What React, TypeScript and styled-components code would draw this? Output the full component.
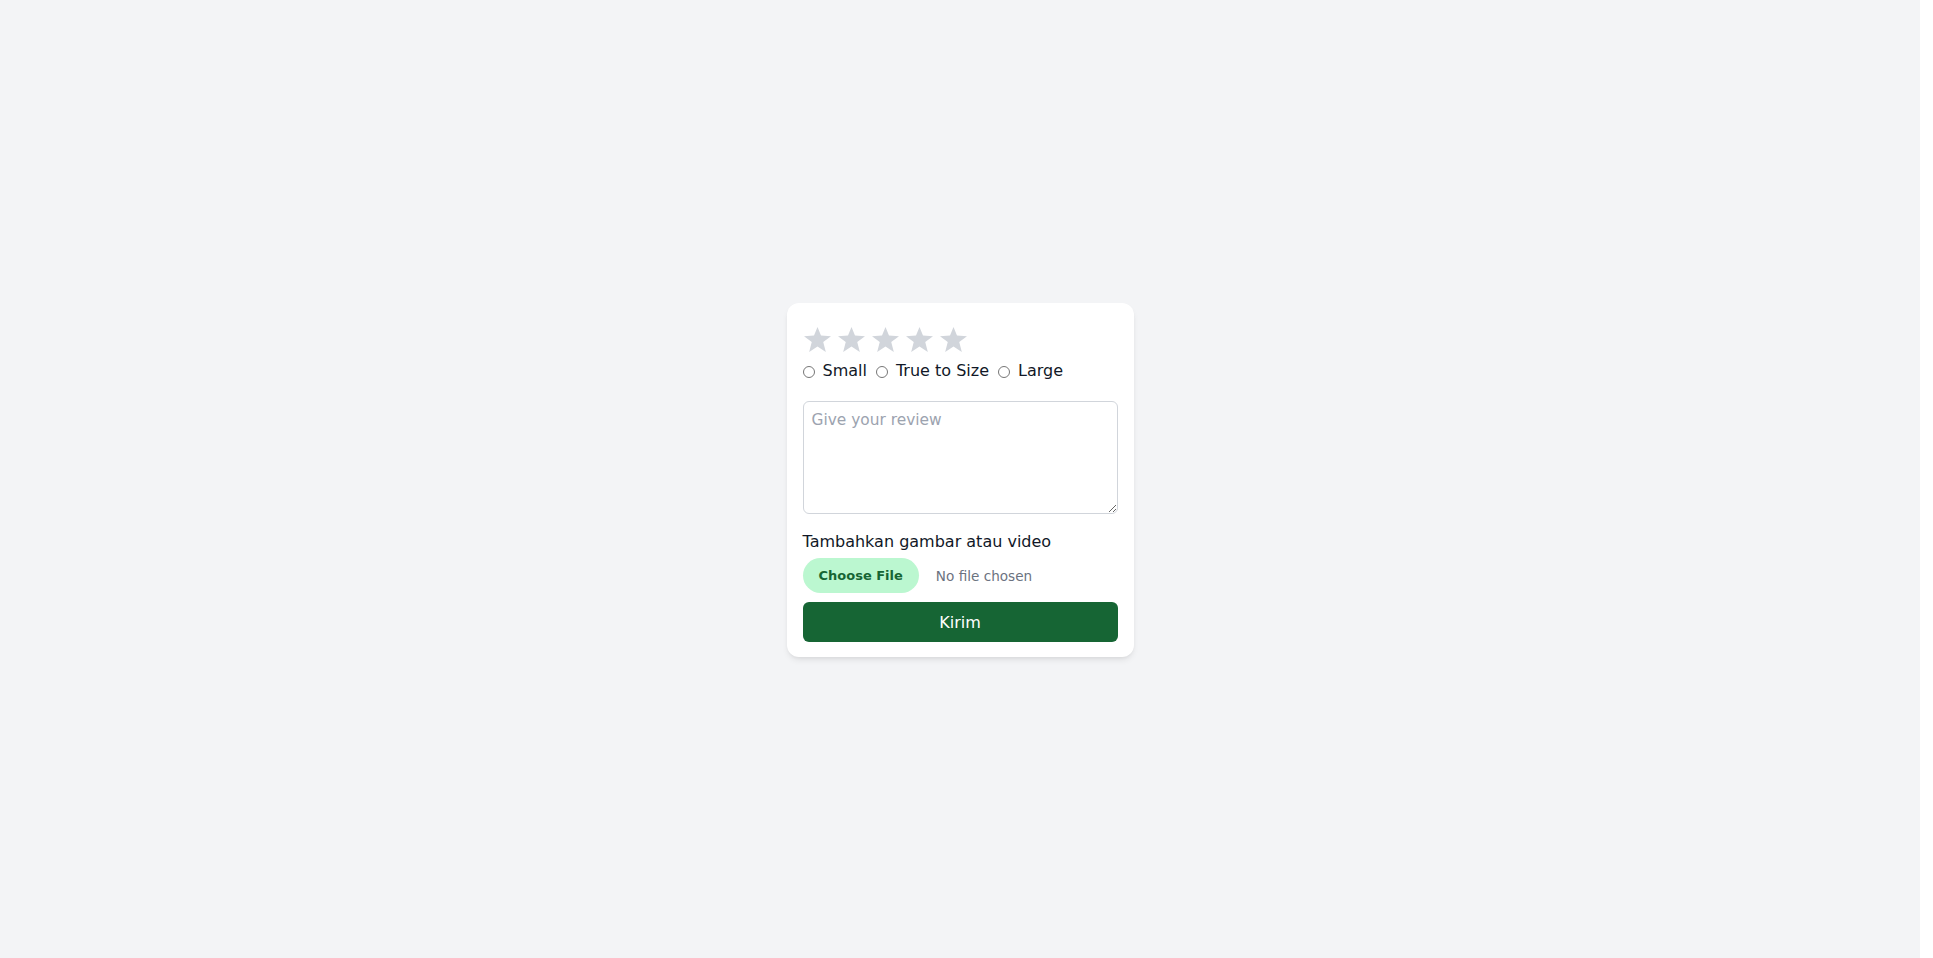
import React from "react";
import styled, { createGlobalStyle } from "styled-components";

const Global = createGlobalStyle`
  html, body { margin: 0; padding: 0; background: #ffffff; }
  body { font-family: "DejaVu Sans", "Liberation Sans", sans-serif; color: #111827; }
  * { box-sizing: border-box; }
`;

const Page = styled.div`
  width: calc(100vw - 13px);
  min-height: 100vh;
  padding-top: 2px;
  background: #f3f4f6;
  display: flex;
  align-items: center;
  justify-content: center;
`;

const Card = styled.form`
  width: 347px;
  background: #ffffff;
  border-radius: 12px;
  padding: 16px 16px 15px;
  box-shadow: 0 4px 6px -1px rgba(0, 0, 0, 0.08), 0 2px 4px -2px rgba(0, 0, 0, 0.08);
  display: flex;
  flex-direction: column;
`;

const StarRow = styled.div`
  display: flex;
  gap: 7px;
  padding: 8px 0 3px 1px;
`;

const StarIcon = styled.svg`
  width: 27px;
  height: 25px;
  display: block;
  fill: #d1d5db;
  cursor: pointer;
`;

const SizeRow = styled.div`
  display: flex;
  align-items: center;
  gap: 9px;
  margin-top: 4px;
  height: 24px;
`;

const SizeOption = styled.label`
  display: flex;
  align-items: center;
  gap: 8px;
  font-size: 16px;
  line-height: 24px;
  color: #111827;
`;

const Radio = styled.input`
  width: 12px;
  height: 12px;
  margin: 1px 0 0 0;
`;

const Review = styled.textarea`
  display: block;
  width: 100%;
  height: 113px;
  margin-top: 18px;
  padding: 8px 8px;
  border: 1px solid #d1d5db;
  border-radius: 6px;
  font-family: "DejaVu Sans", sans-serif;
  font-size: 15.4px;
  line-height: 20px;
  color: #111827;
  &::placeholder { color: #9ca3af; }
`;

const FieldLabel = styled.div`
  margin-top: 16px;
  font-size: 16px;
  line-height: 24px;
  color: #111827;
`;

const FileRow = styled.div`
  display: flex;
  align-items: center;
  gap: 17px;
  margin-top: 4px;
`;

const FileButton = styled.span`
  display: inline-flex;
  align-items: center;
  height: 35px;
  padding: 0 16px;
  border-radius: 999px;
  background: #bbf7d0;
  color: #166534;
  font-size: 13px;
  font-weight: 700;
  cursor: pointer;
`;

const FileStatus = styled.span`
  font-size: 13.6px;
  color: #6b7280;
`;

const Submit = styled.button`
  margin-top: 9px;
  height: 40px;
  width: 100%;
  border: none;
  border-radius: 6px;
  background: #166534;
  color: #ffffff;
  font-family: "DejaVu Sans", sans-serif;
  font-size: 16px;
  cursor: pointer;
`;

const Star = () => (
  <StarIcon viewBox="0 0 24 23" preserveAspectRatio="none">
    <polygon points="12,0 15.1,7.9 24,8.4 17.1,13.8 19.4,23 12,18 4.6,23 6.9,13.8 0,8.4 8.9,7.9" />
  </StarIcon>
);

export default function App() {
  return (
    <>
      <Global />
      <Page>
        <Card onSubmit={(e) => e.preventDefault()}>
          <StarRow>
            {[0, 1, 2, 3, 4].map((i) => (
              <Star key={i} />
            ))}
          </StarRow>
          <SizeRow>
            {["Small", "True to Size", "Large"].map((s) => (
              <SizeOption key={s}>
                <Radio type="radio" name="fit" value={s} />
                {s}
              </SizeOption>
            ))}
          </SizeRow>
          <Review placeholder="Give your review" />
          <FieldLabel>Tambahkan gambar atau video</FieldLabel>
          <FileRow>
            <FileButton>Choose File</FileButton>
            <FileStatus>No file chosen</FileStatus>
          </FileRow>
          <Submit type="submit">Kirim</Submit>
        </Card>
      </Page>
    </>
  );
}
